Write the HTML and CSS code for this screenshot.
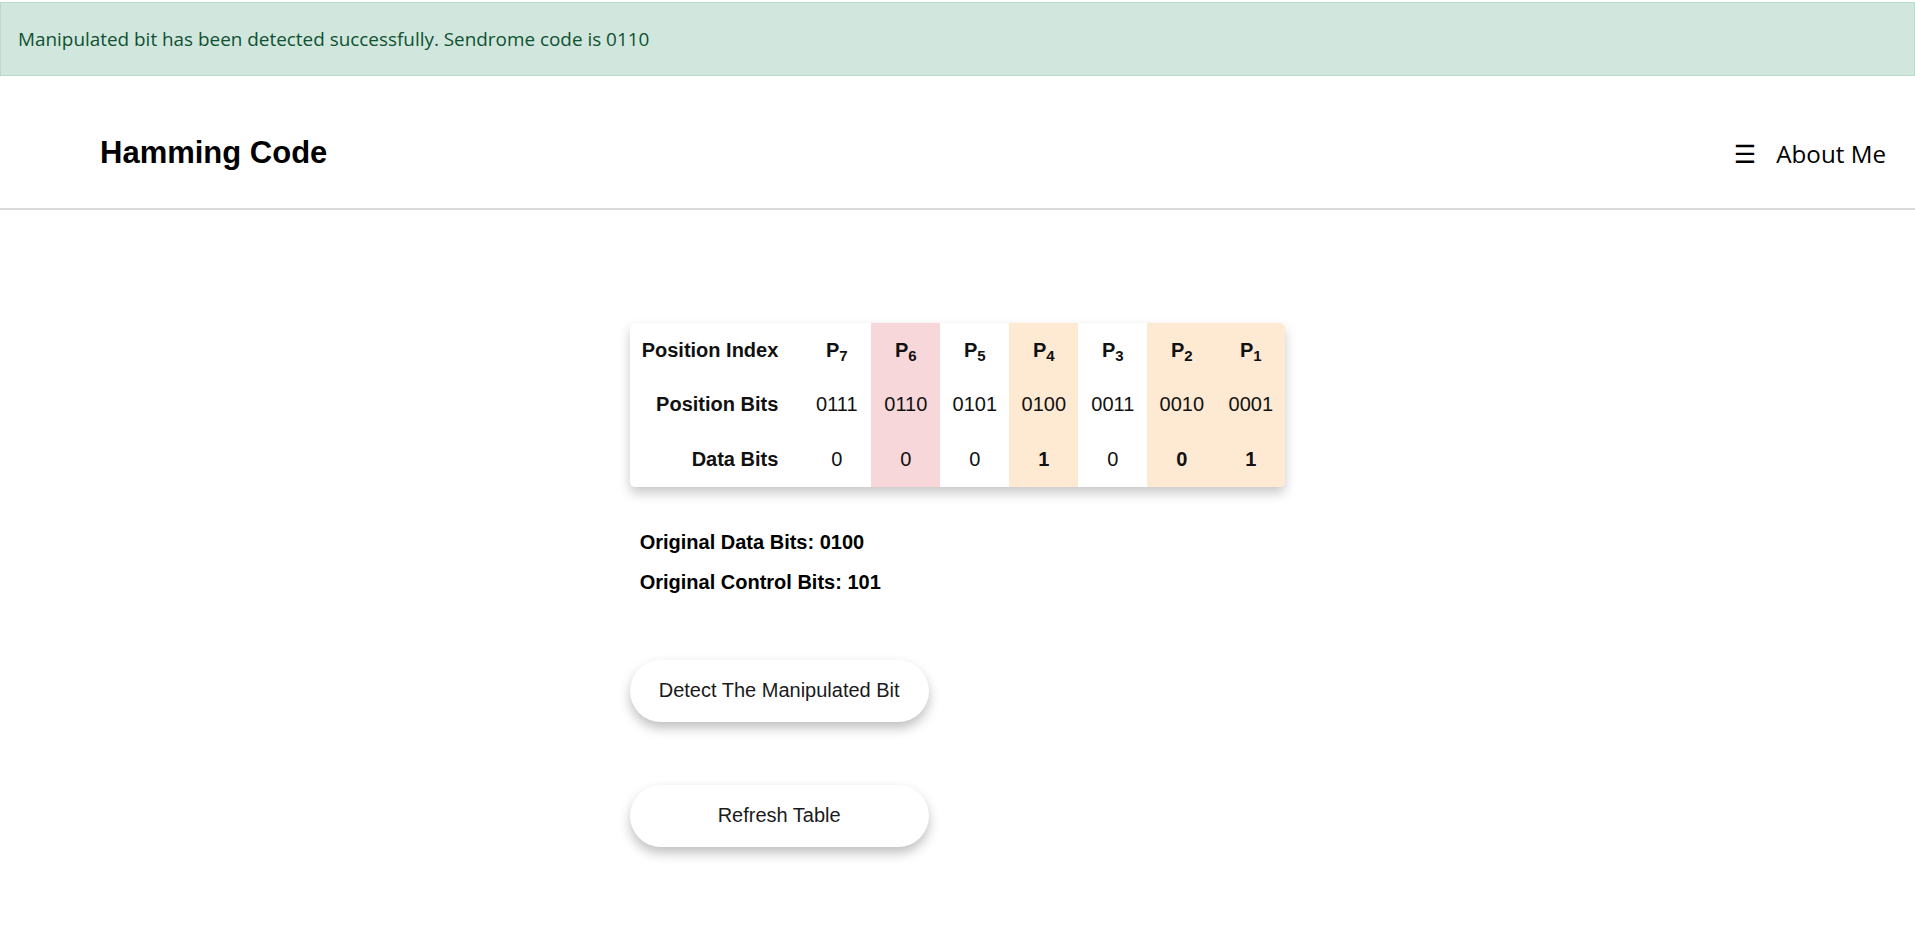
FILE: index.html
```html
<!DOCTYPE html>
<html lang="en">
<head>
<meta charset="utf-8">
<title>Hamming Code</title>
<link rel="stylesheet" href="styles.css">
</head>
<body>
<div class="alert">Manipulated bit has been detected successfully. Sendrome code is 0110</div>
<nav class="nav">
  <div class="brand">Hamming Code</div>
  <div class="nav-right">
    <span class="burger">&#9776;</span>
    <span class="about">About Me</span>
  </div>
</nav>
<main class="main">
  <div class="content">
    <div class="card">
      <table class="bits">
        <tr>
          <th class="label">Position Index</th>
          <th>P<sub>7</sub></th>
          <th class="err">P<sub>6</sub></th>
          <th>P<sub>5</sub></th>
          <th class="par">P<sub>4</sub></th>
          <th>P<sub>3</sub></th>
          <th class="par">P<sub>2</sub></th>
          <th class="par">P<sub>1</sub></th>
        </tr>
        <tr>
          <th class="label">Position Bits</th>
          <td>0111</td>
          <td class="err">0110</td>
          <td>0101</td>
          <td class="par">0100</td>
          <td>0011</td>
          <td class="par">0010</td>
          <td class="par">0001</td>
        </tr>
        <tr>
          <th class="label">Data Bits</th>
          <td>0</td>
          <td class="err">0</td>
          <td>0</td>
          <td class="par strong">1</td>
          <td>0</td>
          <td class="par strong">0</td>
          <td class="par strong">1</td>
        </tr>
      </table>
    </div>
    <div class="info">
      <div class="info-line">Original Data Bits: 0100</div>
      <div class="info-line">Original Control Bits: 101</div>
    </div>
    <div class="actions">
      <button class="pill">Detect The Manipulated Bit</button>
      <button class="pill">Refresh Table</button>
    </div>
  </div>
</main>
</body>
</html>
```

FILE: styles.css
```css
html, body {
  margin: 0;
  padding: 0;
  background: #ffffff;
}

body {
  font-family: "Liberation Sans", Arial, sans-serif;
  color: #111111;
}

.alert {
  margin: 2px 0 20px 0;
  padding: 21px 17px;
  background: #d1e7dd;
  border: 1px solid #badbcc;
  color: #0f5132;
  font-family: "Open Sans", "Noto Sans", sans-serif;
  font-size: 18.9px;
  line-height: 30px;
}

.nav {
  height: 112px;
  padding: 0 29px 0 100px;
  border-bottom: 2px solid #d9d9d9;
  display: flex;
  align-items: center;
  justify-content: space-between;
}

.brand {
  font-family: "Liberation Sans", Arial, sans-serif;
  font-weight: bold;
  font-size: 31px;
  color: #000000;
  padding-top: 2px;
}

.nav-right {
  display: flex;
  align-items: center;
  gap: 20px;
  font-family: "Open Sans", "Noto Sans", sans-serif;
  color: #000000;
  padding-top: 4px;
}

.burger {
  font-family: "DejaVu Sans", sans-serif;
  font-size: 25px;
  line-height: 1;
}

.about {
  font-size: 24.2px;
  line-height: 32px;
}

.main {
  padding-top: 113px;
  padding-bottom: 40px;
  display: flex;
  justify-content: center;
}

.content {
  display: flex;
  flex-direction: column;
  align-items: flex-start;
}

.card {
  background: #ffffff;
  border-radius: 5px;
  overflow: hidden;
  box-shadow: 0 6px 12px rgba(0, 0, 0, 0.22);
}

.bits {
  border-collapse: collapse;
  font-size: 20px;
}

.bits th,
.bits td {
  height: 54.5px;
  padding: 0;
  width: 69px;
  text-align: center;
  vertical-align: middle;
  color: #111111;
}

.bits td {
  font-weight: normal;
}

.bits th {
  font-weight: bold;
}

.bits th.label {
  width: 136px;
  padding: 0 24px 0 12px;
  text-align: right;
  white-space: nowrap;
}

.bits sub {
  font-size: 15px;
  line-height: 0;
  vertical-align: -4px;
}

.bits .err {
  background: #f8d7da;
}

.bits .par {
  background: #fee9d3;
}

.bits .strong {
  font-weight: bold;
}

.info {
  margin-top: 35px;
  padding-left: 10px;
  font-weight: bold;
  font-size: 20px;
  color: #000000;
}

.info-line {
  line-height: 40px;
}

.actions {
  margin-top: 58px;
  display: flex;
  flex-direction: column;
  gap: 63px;
}

.pill {
  width: 299px;
  height: 62px;
  border: none;
  border-radius: 31px;
  background: #ffffff;
  box-shadow: 0 6px 12px rgba(0, 0, 0, 0.25);
  font-family: "Liberation Sans", Arial, sans-serif;
  font-size: 20px;
  color: #1a1a1a;
  padding: 0;
  cursor: pointer;
}
```
